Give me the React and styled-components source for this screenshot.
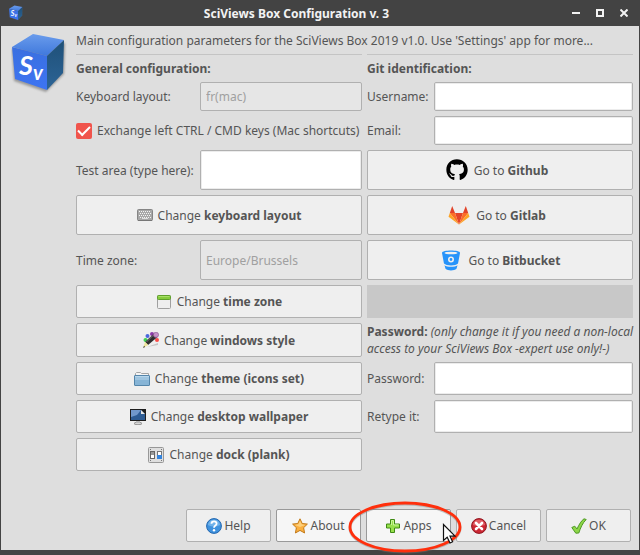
import React from "react";
import styled, { createGlobalStyle } from "styled-components";
import { FaGithub } from "react-icons/fa";

const GlobalStyle = createGlobalStyle`
  * {
    box-sizing: border-box;
  }
  body {
    margin: 0;
    background: #434343;
  }
  body, button, input {
    font-family: "Noto Sans", "Open Sans", sans-serif;
    font-size: 12px;
    line-height: 17px;
    color: #555555;
  }
`;

const Window = styled.div`
  min-height: 100vh;
  display: flex;
  flex-direction: column;
  background: #434343;
`;

const TitleBar = styled.header`
  display: flex;
  align-items: center;
  height: 26px;
  padding: 0 4px 0 8px;
  gap: 5px;
  h1 {
    flex: 1;
    margin: 0;
    font-size: 12px;
    font-weight: 700;
    text-align: center;
    color: #f2f2f2;
  }
`;

const WindowButtons = styled.div`
  display: flex;
  margin-left: -5px;
  button {
    display: flex;
    justify-content: center;
    align-items: center;
    width: 24px;
    height: 24px;
    padding: 0;
    background: none;
    border: none;
  }
`;

const Body = styled.main`
  flex: 1;
  display: flex;
  flex-direction: column;
  margin: 0 1px 5px;
  padding: 6px 6px 8px 10px;
  background: #dedede;
`;

const Content = styled.div`
  display: flex;
  align-items: flex-start;
  gap: 9px;
`;

const LogoBox = styled.div`
  flex: none;
  width: 56px;
  height: 62px;
`;

const Form = styled.div`
  flex: 1;
  min-width: 0;
  display: grid;
  grid-template-columns: minmax(0, 43fr) minmax(0, 40fr);
  gap: 5px;
`;

const Intro = styled.p`
  grid-column: 1 / 3;
  margin: 0;
  white-space: nowrap;
`;

const Separator = styled.hr`
  width: 100%;
  height: 1px;
  margin: 0;
  border: none;
  background: #c4c4c4;
`;

const Heading = styled.h2`
  margin: 0;
  font-size: 12px;
  font-weight: 700;
`;

const Row = styled.div`
  display: flex;
  align-items: center;
  min-height: ${(props) => props.$height || 33}px;
  label {
    flex: 0 0 ${(props) => props.$label}px;
    white-space: nowrap;
  }
`;

const Field = styled.input`
  flex: 1;
  min-width: 0;
  align-self: stretch;
  padding: 0 5px;
  background: #ffffff;
  border: 1px solid #b0b0b0;
  border-radius: 2px;
  box-shadow: inset 0 0 0 1px #ececec;
  outline: none;
  &:disabled {
    background: #e6e6e6;
    color: #a0a0a0;
    box-shadow: none;
  }
`;

const CheckRow = styled.label`
  display: flex;
  align-items: center;
  gap: 5px;
  min-height: 29px;
  white-space: nowrap;
`;

const CheckBox = styled.input`
  appearance: none;
  flex: none;
  display: grid;
  place-content: center;
  width: 16px;
  height: 16px;
  margin: 0;
  background: #f0544c;
  border-radius: 2px;
  &:checked::before {
    content: "";
    width: 10px;
    height: 5px;
    margin-top: -3px;
    border-left: 2px solid #ffffff;
    border-bottom: 2px solid #ffffff;
    transform: rotate(-45deg);
  }
`;

const Button = styled.button`
  display: flex;
  justify-content: center;
  align-items: center;
  gap: 5px;
  min-height: ${(props) => props.$height || 33}px;
  padding: 0 ${(props) => props.$padRight || 0}px 0 0;
  background: #efefef;
  border: 1px solid #b0b0b0;
  border-radius: 2px;
  white-space: nowrap;
  svg {
    flex: none;
  }
`;

const Placeholder = styled.div`
  background: #c8c8c8;
`;

const Note = styled.p`
  margin: 0;
  white-space: nowrap;
`;

const Footer = styled.footer`
  display: flex;
  justify-content: flex-end;
  gap: 5px;
  margin-top: auto;
  padding: 0 2px 0 0;
`;

const Action = styled(Button)`
  position: relative;
  width: 85px;
  gap: 2px;
  background: ${(props) => (props.$lit ? "#f6f6f6" : "#efefef")};
  border-color: ${(props) => (props.$lit ? "#999999" : "#b0b0b0")};
`;

const Marker = styled.svg`
  position: absolute;
  left: -19px;
  top: -10px;
  z-index: 2;
  pointer-events: none;
`;

const Svg = ({ size = 16, children }) => (
  <svg width={size} height={size} viewBox={`0 0 ${size} ${size}`} aria-hidden="true">
    {children}
  </svg>
);

function Logo({ width, height }) {
  return (
    <svg width={width} height={height} viewBox="0 0 56 62" aria-hidden="true">
      <defs>
        <linearGradient id="cubeTop" x1="0" y1="0" x2="0" y2="1">
          <stop offset="0" stopColor="#6a9cec" />
          <stop offset="1" stopColor="#3f78dc" />
        </linearGradient>
        <linearGradient id="cubeFront" x1="0" y1="0" x2="0" y2="1">
          <stop offset="0" stopColor="#3a70e0" />
          <stop offset="1" stopColor="#3d74f2" />
        </linearGradient>
        <linearGradient id="cubeSide" x1="0" y1="0" x2="0" y2="1">
          <stop offset="0" stopColor="#1f5078" />
          <stop offset="1" stopColor="#2c6496" />
        </linearGradient>
        <filter id="cubeShadow" x="-20%" y="-20%" width="140%" height="140%">
          <feGaussianBlur stdDeviation="1" />
        </filter>
      </defs>
      <path d="M1 17 L3 49 L35 60 L53 42 L54 11 Z" fill="#555555" opacity="0.5" filter="url(#cubeShadow)" />
      <path d="M22 2 L53 8 L36 24 L1 15 Z" fill="url(#cubeTop)" />
      <path d="M1 15 L36 24 L36 58 L4 47 Z" fill="url(#cubeFront)" />
      <path d="M53 8 L36 24 L36 58 L52 41 Z" fill="url(#cubeSide)" />
      <g fill="#ffffff" fontFamily="Lato, sans-serif" fontStyle="italic" fontWeight="700">
        <text x="8" y="43" fontSize="27">
          S<tspan fontSize="20" dy="5">v</tspan>
        </text>
      </g>
    </svg>
  );
}

const KeyboardIcon = () => (
  <Svg>
    <rect x="0.5" y="2.5" width="15" height="11" rx="1" fill="#a8a8a8" stroke="#858585" />
    <g stroke="#f4f4f4" strokeWidth="1" strokeDasharray="1 1">
      <path d="M2 4.5h12M3 6.5h11M2 8.5h12M3 10.5h11" />
    </g>
    <path d="M5 11.5h6" stroke="#dddddd" />
    <path d="M1 13.5h14" stroke="#777777" />
  </Svg>
);

const WindowIcon = () => (
  <Svg>
    <rect x="1.5" y="1.5" width="13" height="13" rx="1" fill="#eeeeee" stroke="#a0a0a0" />
    <rect x="1.5" y="1.5" width="13" height="4" rx="1" fill="#86cc3e" stroke="#5fa02b" />
    <path d="M2.5 2.5h11" stroke="#a7df68" />
  </Svg>
);

const PaletteIcon = () => (
  <Svg>
    <path d="M4 15 L15 11 L15 13 Z" fill="#c6c6c6" />
    <circle cx="2.5" cy="8" r="2" fill="#3fd052" />
    <circle cx="4.5" cy="4" r="2" fill="#4967dc" />
    <circle cx="9" cy="2" r="2" fill="#8b3aa8" />
    <circle cx="14" cy="8" r="2" fill="#fa4c48" />
    <path d="M11 1.5 L14.5 5 L5 13 L2 10 Z" fill="#2f2f2f" />
    <path d="M10.5 3 L3.5 10" stroke="#777777" />
    <circle cx="13" cy="2.8" r="2.6" fill="#c491c8" stroke="#865090" strokeWidth="0.6" />
    <path d="M2 9.8 L5.2 13 L0.3 15.7 Z" fill="#eee69b" />
    <path d="M1 13.8 L2 15 L0.2 15.9 Z" fill="#222222" />
  </Svg>
);

const FolderIcon = () => (
  <Svg>
    <path d="M1.5 5V2.5L2.5 1.5H6.5L7.5 2.5H14.5V5" fill="#f4f4f4" stroke="#a5a5a5" />
    <rect x="0.5" y="4.5" width="15" height="10" rx="0.5" fill="#86b4d6" stroke="#5485aa" />
    <path d="M1 5.5h14" stroke="#b7d6ec" />
    <path d="M1 6h14v3H1z" fill="#9fc5e0" />
  </Svg>
);

const DesktopIcon = () => (
  <Svg>
    <ellipse cx="8" cy="14.5" rx="4" ry="1.2" fill="#d8d8d8" stroke="#858585" strokeWidth="0.8" />
    <path d="M6 11h4v3H6z" fill="#bababa" />
    <rect x="0" y="0" width="16" height="12" fill="#1e1e1e" />
    <rect x="1" y="1" width="14" height="10" fill="#2d5c94" />
    <path d="M1 1h10L7 6L1 8z" fill="#7098cb" />
    <path d="M11 1h4v4z" fill="#1e1e1e" />
    <path d="M11 1l4 4h-4z" fill="#e8e8e8" />
  </Svg>
);

const DockIcon = () => (
  <Svg>
    <rect x="0.5" y="0.5" width="15" height="15" rx="1" fill="#dfdfdf" stroke="#989898" />
    <g fill="#777777">
      <path d="M2 2h1v1H2zM13 2h1v1h-1zM2 13h1v1H2zM13 13h1v1h-1z" />
    </g>
    <rect x="2.5" y="4.5" width="4" height="7" fill="#999999" stroke="#666666" />
    <path d="M3 8h3v3H3z" fill="#ffffff" />
    <rect x="9.5" y="4.5" width="4" height="7" fill="#ffffff" stroke="#777777" />
    <path d="M9 8h5v4H9z" fill="#3584dc" />
  </Svg>
);

const GithubIcon = () => (
  <Svg size={24}>
    <FaGithub x="1" y="1" size={22} color="#000000" />
  </Svg>
);

const GitlabIcon = () => (
  <Svg size={24}>
    <path d="M12 21.5 L16 10 H8 Z" fill="#e24329" />
    <path d="M12 21.5 L8 10 H2.8 Z" fill="#fc6d26" />
    <path d="M2.8 10 L1.5 13.7 L12 21.5 Z" fill="#fca326" />
    <path d="M2.8 10 H8 L5.2 3 Z" fill="#e24329" />
    <path d="M12 21.5 L16 10 H21.2 Z" fill="#fc6d26" />
    <path d="M21.2 10 L22.5 13.7 L12 21.5 Z" fill="#fca326" />
    <path d="M21.2 10 H16 L18.8 3 Z" fill="#e24329" />
  </Svg>
);

const BitbucketIcon = () => (
  <Svg size={24}>
    <path d="M3 5 C3 1.8 21 1.8 21 5 L19 15.5 C17 18 7 18 5 15.5 Z" fill="#2693fa" />
    <ellipse cx="12" cy="5" rx="6.5" ry="1.3" fill="#efefef" />
    <circle cx="12" cy="11.5" r="2.2" fill="#2693fa" stroke="#efefef" strokeWidth="1.6" />
    <path d="M5.5 17.3 C8 19.3 16 19.3 18.5 17.3 L17.5 20.8 C15 22.9 9 22.9 6.5 20.8 Z" fill="#2693fa" />
  </Svg>
);

const HelpIcon = () => (
  <Svg>
    <circle cx="8" cy="8" r="7.4" fill="#3f92de" stroke="#2467ae" />
    <path d="M1.8 7 A6.3 6.3 0 0 1 14.2 7 Q8 10 1.8 7" fill="#70b2ea" />
    <path d="M5.5 5.8 C5.5 2.6 10.8 2.6 10.6 5.8 C10.5 7.6 8 7.6 8 9.8" fill="none" stroke="#ffffff" strokeWidth="1.8" />
    <circle cx="8" cy="12.3" r="1.2" fill="#ffffff" />
  </Svg>
);

const StarIcon = () => (
  <Svg>
    <path
      d="M8 0.8 L10.2 5.5 L15.4 6.1 L11.6 9.7 L12.6 15 L8 12.4 L3.4 15 L4.4 9.7 L0.6 6.1 L5.8 5.5 Z"
      fill="#fbb040"
      stroke="#c27a1a"
      strokeLinejoin="round"
    />
    <path d="M8 2.8 L9.6 6.3 L13.2 6.9 L8 9 L2.8 6.9 L6.4 6.3 Z" fill="#fdd07c" />
  </Svg>
);

const PlusIcon = () => (
  <Svg>
    <path d="M5.5 1.5h4v4.5h5v4h-5v4.5h-4V10h-4V6h4z" fill="#97e04c" stroke="#3f8a14" />
    <path d="M6.5 7V2.5h2V7h5" fill="none" stroke="#c9f59a" />
  </Svg>
);

const CancelIcon = () => (
  <Svg>
    <circle cx="8" cy="8" r="7.4" fill="#cc2733" stroke="#8f1620" />
    <path d="M1.8 7 A6.3 6.3 0 0 1 14.2 7 Q8 9 1.8 7" fill="#df5f66" />
    <path d="M5 5L11 11M11 5L5 11" stroke="#ffffff" strokeWidth="2.6" strokeLinecap="round" />
  </Svg>
);

const OkIcon = () => (
  <Svg>
    <path
      d="M0.8 9.5 L3.8 8.2 L6 11 C8 6.5 10.5 2.5 13 0.8 L15.2 1.5 C11.5 5 9.5 10 7.8 15 L4.8 15.2 Z"
      fill="#8ed648"
      stroke="#4f9926"
      strokeLinejoin="round"
    />
  </Svg>
);

function App() {
  return (
    <>
      <GlobalStyle />
      <Window>
        <TitleBar>
          <Logo width={16} height={16} />
          <h1>SciViews Box Configuration v. 3</h1>
          <WindowButtons>
            <button type="button" aria-label="Minimize">
              <Svg size={8}>
                <path d="M0 3h8v2H0z" fill="#f2f2f2" />
              </Svg>
            </button>
            <button type="button" aria-label="Maximize">
              <Svg size={8}>
                <rect x="1" y="1" width="6" height="6" fill="none" stroke="#f2f2f2" strokeWidth="2" />
              </Svg>
            </button>
            <button type="button" aria-label="Close">
              <Svg size={8}>
                <path d="M0.5 0.5L7.5 7.5M7.5 0.5L0.5 7.5" stroke="#f2f2f2" strokeWidth="2" />
              </Svg>
            </button>
          </WindowButtons>
        </TitleBar>
        <Body>
          <Content>
            <LogoBox>
              <Logo width={56} height={62} />
            </LogoBox>
            <Form>
              <Intro>
                Main configuration parameters for the SciViews Box 2019 v1.0. Use 'Settings' app for more...
              </Intro>
              <Separator />
              <Separator />
              <Heading>General configuration:</Heading>
              <Heading>Git identification:</Heading>

              <Row $height={29} $label={124}>
                <label htmlFor="layout">Keyboard layout:</label>
                <Field id="layout" defaultValue="fr(mac)" disabled />
              </Row>
              <Row $height={29} $label={67}>
                <label htmlFor="username">Username:</label>
                <Field id="username" />
              </Row>

              <CheckRow>
                <CheckBox type="checkbox" defaultChecked />
                Exchange left CTRL / CMD keys (Mac shortcuts)
              </CheckRow>
              <Row $height={29} $label={67}>
                <label htmlFor="email">Email:</label>
                <Field id="email" />
              </Row>

              <Row $height={40} $label={124}>
                <label htmlFor="test">Test area (type here):</label>
                <Field id="test" />
              </Row>
              <Button type="button" $height={40} $padRight={7}>
                <GithubIcon />
                <span>Go to <b>Github</b></span>
              </Button>

              <Button type="button" $height={40}>
                <KeyboardIcon />
                <span>Change <b>keyboard layout</b></span>
              </Button>
              <Button type="button" $height={40} $padRight={7}>
                <GitlabIcon />
                <span>Go to <b>Gitlab</b></span>
              </Button>

              <Row $height={40} $label={124}>
                <label htmlFor="zone">Time zone:</label>
                <Field id="zone" defaultValue="Europe/Brussels" disabled />
              </Row>
              <Button type="button" $height={40}>
                <BitbucketIcon />
                <span>Go to <b>Bitbucket</b></span>
              </Button>

              <Button type="button">
                <WindowIcon />
                <span>Change <b>time zone</b></span>
              </Button>
              <Placeholder />

              <Button type="button">
                <PaletteIcon />
                <span>Change <b>windows style</b></span>
              </Button>
              <Note>
                <b>Password:</b> <i>(only change it if you need a non-local</i>
                <br />
                <i>access to your SciViews Box -expert use only!-)</i>
              </Note>

              <Button type="button">
                <FolderIcon />
                <span>Change <b>theme (icons set)</b></span>
              </Button>
              <Row $label={67}>
                <label htmlFor="password">Password:</label>
                <Field id="password" type="password" />
              </Row>

              <Button type="button">
                <DesktopIcon />
                <span>Change <b>desktop wallpaper</b></span>
              </Button>
              <Row $label={67}>
                <label htmlFor="retype">Retype it:</label>
                <Field id="retype" type="password" />
              </Row>

              <Button type="button">
                <DockIcon />
                <span>Change <b>dock (plank)</b></span>
              </Button>
            </Form>
          </Content>
          <Footer>
            <Action type="button">
              <HelpIcon />
              <span>Help</span>
            </Action>
            <Action type="button" $lit>
              <StarIcon />
              <span>About</span>
            </Action>
            <Action type="button" $lit>
              <PlusIcon />
              <span>Apps</span>
              <Marker width="120" height="54" viewBox="0 0 120 54" aria-hidden="true">
                <ellipse cx="57" cy="28" rx="55" ry="24" fill="none" stroke="#777777" strokeOpacity="0.4" strokeWidth="3" />
                <ellipse cx="57" cy="27" rx="55" ry="24" fill="none" stroke="#ff2f0c" strokeWidth="2.8" />
                <path
                  d="M95.5 24.5 V40.5 L99.2 37.2 L102 43 L104.6 41.8 L102 36.2 H107 Z"
                  fill="#ffffff"
                  stroke="#111111"
                  strokeWidth="1.2"
                />
              </Marker>
            </Action>
            <Action type="button">
              <CancelIcon />
              <span>Cancel</span>
            </Action>
            <Action type="button">
              <OkIcon />
              <span>OK</span>
            </Action>
          </Footer>
        </Body>
      </Window>
    </>
  );
}

export default App;
